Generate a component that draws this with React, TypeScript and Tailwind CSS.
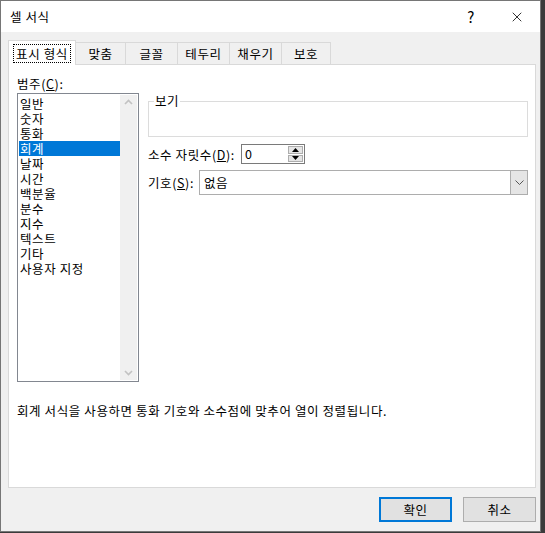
import { X } from "lucide-react";

const categories = [
  "일반",
  "숫자",
  "통화",
  "회계",
  "날짜",
  "시간",
  "백분율",
  "분수",
  "지수",
  "텍스트",
  "기타",
  "사용자 지정",
];

const tabs = [
  { label: "맞춤", w: "w-[50px]" },
  { label: "글꼴", w: "w-[52px]" },
  { label: "테두리", w: "w-[52px]" },
  { label: "채우기", w: "w-[52px]" },
  { label: "보호", w: "w-[49px]" },
];

const font = { fontFamily: '"Noto Sans CJK KR", "Noto Sans", sans-serif' };

export default function App() {
  return (
    <div className="w-[545px] h-[533px] bg-[#3b3b3b] overflow-hidden" style={font}>
      <div className="w-[541px] h-[532px] border border-[#767676] bg-[#f0f0f0] flex flex-col text-[12.5px] tracking-[0.6px] text-black leading-[15px]">
        {/* title bar */}
        <div className="h-[31px] bg-white flex items-center shrink-0">
          <span className="pl-[9px] flex-1">셀 서식</span>
          <span className="w-[46px] text-center text-[15px]">?</span>
          <span className="w-[46px] flex justify-center">
            <X className="w-[16px] h-[16px]" strokeWidth={1.2} />
          </span>
        </div>

        {/* tabs */}
        <div className="flex items-end pl-[7px] h-[32px] shrink-0">
          <div className="w-[68px] h-[25px] bg-white border border-b-0 border-[#d9d9d9] flex items-center justify-center relative z-10 -mb-px">
            <span className="border border-dotted border-black px-[2px] h-[19px] flex items-center">표시 형식</span>
          </div>
          {tabs.map((t) => (
            <div
              key={t.label}
              className={`${t.w} h-[22px] bg-[#f0f0f0] border border-l-0 border-b-0 border-[#d9d9d9] flex items-center justify-center`}
            >
              {t.label}
            </div>
          ))}
        </div>

        {/* panel */}
        <div className="ml-[7px] w-[528px] h-[424px] bg-white border border-[#d9d9d9] flex flex-col pl-[8px] pr-[7px]">
          <div className="flex gap-[9px]">
            <div className="flex flex-col pt-[11px]">
              <span className="h-[15px]">
                범주(<span className="underline">C</span>):
              </span>
              <div className="mt-[2px] w-[122px] h-[289px] border border-[#828790] flex p-px">
                <div className="flex-1 flex flex-col pt-[1px]">
                  {categories.map((c) => (
                    <div
                      key={c}
                      className={
                        c === "회계"
                          ? "h-[15px] pl-[1px] bg-[#0078d7] text-white"
                          : "h-[15px] pl-[1px]"
                      }
                    >
                      {c}
                    </div>
                  ))}
                </div>
                <div className="w-[17px] bg-[#f0f0f0] flex flex-col justify-between items-center py-[4px]">
                  <svg width="9" height="6" viewBox="0 0 9 6">
                    <path d="M1 5 L4.5 1.5 L8 5" stroke="#c2c2c2" strokeWidth="1.6" fill="none" />
                  </svg>
                  <svg width="9" height="6" viewBox="0 0 9 6">
                    <path d="M1 1 L4.5 4.5 L8 1" stroke="#c2c2c2" strokeWidth="1.6" fill="none" />
                  </svg>
                </div>
              </div>
            </div>

            <div className="flex-1 flex flex-col pt-[36px]">
              <div className="relative h-[36px] border border-[#dcdcdc]">
                <span className="absolute -top-[9px] left-[5px] bg-white px-px">보기</span>
              </div>
              <div className="flex items-center mt-[7px] h-[20px]">
                <span className="w-[93px]">
                  소수 자릿수(<span className="underline">D</span>):
                </span>
                <div className="w-[64px] h-[20px] border border-[#7a7a7a] flex">
                  <span className="flex-1 pl-[3px] leading-[18px]">0</span>
                  <div className="w-[16px] flex flex-col gap-px py-px pr-px">
                    <div className="flex-1 bg-[#e5e5e5] border border-[#adadad] flex items-center justify-center">
                      <svg width="7" height="4" viewBox="0 0 7 4"><path d="M0 4 L3.5 0 L7 4Z" fill="#000" /></svg>
                    </div>
                    <div className="flex-1 bg-[#e5e5e5] border border-[#adadad] flex items-center justify-center">
                      <svg width="7" height="4" viewBox="0 0 7 4"><path d="M0 0 L3.5 4 L7 0Z" fill="#000" /></svg>
                    </div>
                  </div>
                </div>
              </div>
              <div className="flex items-center mt-[6px] h-[25px]">
                <span className="w-[51px]">
                  기호(<span className="underline">S</span>):
                </span>
                <div className="flex-1 h-[25px] border border-[#adadad] bg-white flex">
                  <span className="flex-1 pl-[4px] leading-[23px]">없음</span>
                  <div className="w-[17px] bg-[#e5e5e5] border-l border-[#adadad] flex items-center justify-center">
                    <svg width="9" height="5" viewBox="0 0 9 5">
                      <path d="M0.5 0.5 L4.5 4.5 L8.5 0.5" stroke="#555" strokeWidth="1" fill="none" />
                    </svg>
                  </div>
                </div>
              </div>
            </div>
          </div>

          <p className="mt-[21px]">회계 서식을 사용하면 통화 기호와 소수점에 맞추어 열이 정렬됩니다.</p>
        </div>

        {/* buttons */}
        <div className="flex justify-end gap-[11px] pr-[4px] mt-[9px]">
          <button className="w-[73px] h-[25px] border-2 border-[#0078d7] bg-[#e1e1e1]">확인</button>
          <button className="w-[73px] h-[25px] border border-[#adadad] bg-[#e1e1e1]">취소</button>
        </div>
      </div>
    </div>
  );
}
